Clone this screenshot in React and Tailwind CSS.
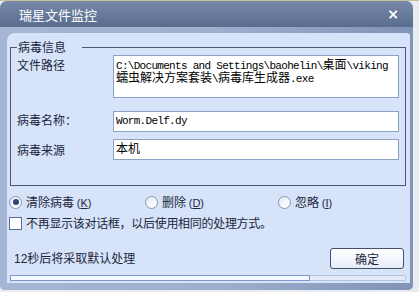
const cjk = "font-['Noto_Sans_CJK_SC',sans-serif]";

const Radio = ({ checked, label, hotkey, className }) => (
  <div className={`flex items-center gap-[4px] ${className}`}>
    <span className="w-[13px] h-[13px] rounded-full border border-[#8597b8] bg-gradient-to-br from-[#e6ecf5] to-white flex items-center justify-center">
      {checked && <span className="w-[6px] h-[6px] rounded-full bg-[#2c4675]" />}
    </span>
    <span className="leading-[14px]">
      {label} <span className="font-['Liberation_Sans',sans-serif] text-[11px]">(<u>{hotkey}</u>)</span>
    </span>
  </div>
);

const Field = ({ children }) => (
  <div className="w-[286px] h-[21px] border border-[#8da2c4] bg-white flex items-center pl-[2px] text-[#000]">
    {children}
  </div>
);

export default function App() {
  const mono = "inline-block leading-[13px] font-['Liberation_Mono',monospace] text-[11px] tracking-[-0.7px]";
  const han = "inline-block leading-[13px] text-[12px]";
  return (
    <div className={`w-[419px] h-[292px] bg-[#e9ecf1] overflow-hidden text-[12px] text-[#1c2740] ${cjk}`}>
      <div className="border-t border-[#c8bf9c] w-[419px]" />
      <div className="w-[413px] h-[289px] rounded-t-[7px] rounded-b-[5px] bg-[#8e9fc0] flex flex-col overflow-hidden">
        {/* title bar */}
        <div className="h-[26px] shrink-0 flex items-center justify-between pl-[19px] pr-[14px] bg-gradient-to-b from-[#7789a9] to-[#5a6d8f] text-white">
          <span className="text-[13px] leading-[14px] pt-[1px]">瑞星文件监控</span>
          <span className="font-['DejaVu_Sans',sans-serif] text-[14px] font-bold leading-none">×</span>
        </div>
        <div className="flex-1 bg-gradient-to-r from-[#a5b6d4] via-[#9fb0cf] to-[#8193b6] pt-[6px] pl-[7px] pr-[3px] pb-[7px]">
          <div className="h-full rounded-tl-[8px] rounded-tr-[3px] bg-[#d7e3f8] flex flex-col">
            {/* group box */}
            <fieldset className="ml-[3px] mr-[4px] mt-[7px] h-[146px] border border-[#4b5672] px-0 pb-0">
              <legend className="ml-[6px] pl-[1px] pr-[16px] leading-[14px] text-[12px]">病毒信息</legend>
              <div className="flex mt-[1px]">
                <div className="w-[102px] pl-[6px] pt-[3px] leading-[14px]">文件路径</div>
                <div className="w-[286px] h-[43px] border border-[#8da2c4] bg-white pl-[2px] pt-[1px] text-[#000] leading-[13px]">
                  <div className="whitespace-nowrap h-[13px] flex items-baseline">
                    <span className={mono}>C:\Documents and Settings\baohelin\</span>
                    <span className={han}>桌面</span>
                    <span className={mono}>\viking</span>
                  </div>
                  <div className="whitespace-nowrap h-[13px] flex items-baseline">
                    <span className={han}>蠕虫解决方案套装</span>
                    <span className={mono}>\</span>
                    <span className={han}>病毒库生成器</span>
                    <span className={mono}>.exe</span>
                  </div>
                </div>
              </div>
              <div className="flex mt-[13px] items-center">
                <div className="w-[102px] pl-[6px] leading-[14px] pb-[3px]">病毒名称：</div>
                <Field>
                  <span className={mono}>Worm.Delf.dy</span>
                </Field>
              </div>
              <div className="flex mt-[7px] items-center">
                <div className="w-[102px] pl-[6px] leading-[14px] pt-[1px]">病毒来源</div>
                <Field>
                  <span className="text-[12px] leading-[14px] pb-[3px]">本机</span>
                </Field>
              </div>
            </fieldset>

            {/* actions */}
            <div className="flex mt-[9px] pl-[2px] h-[14px]">
              <Radio checked label="清除病毒" hotkey="K" className="w-[136px]" />
              <Radio label="删除" hotkey="D" className="w-[133px]" />
              <Radio label="忽略" hotkey="I" />
            </div>
            <div className="flex items-center gap-[4px] mt-[7px] pl-[2px] h-[14px]">
              <span className="w-[13px] h-[13px] border border-[#5b6f94] bg-white" />
              <span className="tracking-[-0.3px] leading-[14px]">不再显示该对话框，以后使用相同的处理方式。</span>
            </div>
            <div className="flex items-center justify-between mt-[18px] pl-[7px] pr-[6px] h-[21px]">
              <span className="leading-[14px]">
                <span className="font-['Liberation_Sans',sans-serif]">12</span>秒后将采取默认处理
              </span>
              <button className="w-[74px] h-[21px] rounded-[3px] border border-[#43516e] bg-gradient-to-b from-white to-[#e6edf8] text-[12px] leading-[14px] text-[#1c2740]">
                确定
              </button>
            </div>
            <div className="mt-[6px] ml-[3px] mr-[4px] h-[6px] flex border border-[#b3c4e0] rounded-[1px] bg-[#e4ecf9]">
              <div className="w-[300px] -m-[1px] h-[6px] border border-[#7b98cc] bg-[#f4f7fd]" />
            </div>
          </div>
        </div>
      </div>
    </div>
  );
}
